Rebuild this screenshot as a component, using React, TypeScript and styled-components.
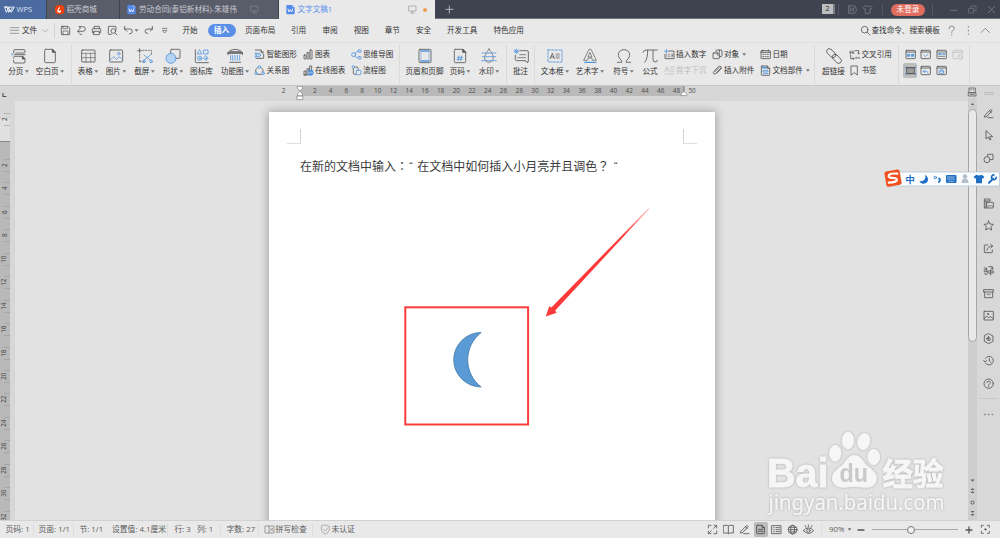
import React from "react";
import styled, { createGlobalStyle } from "styled-components";

const K = "#555";
const B = "#5596dd";

const Global = createGlobalStyle`
  * { box-sizing: border-box; }
  body { margin: 0; background: #e2e2e2; overflow: hidden; }
`;

const App_ = styled.div`
  position: relative;
  width: 1000px;
  height: 538px;
  display: flex;
  flex-direction: column;
  overflow: hidden;
  font-family: "Open Sans", "Noto Sans CJK SC", sans-serif;
  font-size: 7.6px;
  line-height: 1;
  color: #333;
  white-space: nowrap;
`;

/* ---------- icons: three drawing units per pixel ---------- */
const Svg = styled.svg`
  display: block;
  flex: none;
  fill: none;
  stroke-linecap: round;
  stroke-linejoin: round;
`;

type IconProps = { name: string; size: number; color?: string };

const paths: Record<string, React.ReactNode> = {
  pageBreak: (
    <>
      <path d="M8 15V8q0-3 3-3h28q3 0 3 3v4q0 3-3 3H14" />
      <path d="M10 20h32M8 31v-3q0-3 3-3h24l7 7v10q0 3-3 3H11q-3 0-3-3v-5" />
      <path d="M35 25l7 8h-7z" fill={K} />
      <path d="M2 15l5 4-5 4z" fill={B} stroke="none" />
    </>
  ),
  blank: (
    <>
      <path d="M11 4h20l9 9v28q0 3-3 3H11q-3 0-3-3V7q0-3 3-3z" />
      <path d="M31 4v9h9z" fill={K} />
    </>
  ),
  table: (
    <>
      <rect x="5" y="6" width="40" height="36" rx="2" />
      <path d="M5 16h40M5 29h40M18 16v26M32 16v26" strokeWidth="1.8" />
    </>
  ),
  picture: (
    <>
      <rect x="5" y="6" width="39" height="36" rx="3" />
      <path d="M8 35l9-9 9 8 8-8 8 8" stroke={B} />
      <circle cx="32" cy="17" r="4" stroke={B} />
    </>
  ),
  snip: (
    <>
      <path d="M8 2v12M2 8h12M18 7h3M26 7h3M34 7h3M43 7v3M43 15v4M8 19v3M8 27v3M8 36v5h4M17 41h2" />
      <path d="M21 21l19 16M40 21L21 37" stroke={B} />
      <circle cx="21" cy="40" r="4" stroke={B} />
      <circle cx="42" cy="40" r="4" stroke={B} />
    </>
  ),
  shapes: (
    <>
      <rect x="17" y="4" width="28" height="27" rx="3" />
      <circle cx="18" cy="31" r="15" fill="#b5d4f1" stroke={B} />
    </>
  ),
  iconLib: (
    <g stroke={B}>
      <path d="M4 5v36q0 3 3 3h36" stroke={K} />
      <path d="M17 6l7 12H10z" />
      <rect x="30" y="6" width="12" height="12" />
      <circle cx="17" cy="31" r="6.5" />
      <circle cx="17" cy="31" r="1.5" />
      <path d="M36 24l6.5 6.5L36 38l-6.5-7.5z" />
      <circle cx="36" cy="31" r="1.5" />
    </g>
  ),
  funcChart: (
    <>
      <path d="M3 20v-5q0-4 4-4h35q4 0 4 4v5M9 7q15-7 31 0" />
      <path d="M3 15h43" strokeWidth="4" />
      <path d="M11 22v15M17 22v15M24 22v15M31 22v15M38 22v15" stroke={B} />
      <path d="M8 43h33" />
    </>
  ),
  header: (
    <>
      <rect x="6" y="4" width="36" height="40" rx="3" />
      <path d="M12 9h24M12 39h24" stroke={B} strokeWidth="5" />
      <path d="M12 12v24M36 12v24" stroke={B} strokeWidth="1.5" />
    </>
  ),
  pageNo: (
    <>
      <path d="M10 4h22l9 9v28q0 3-3 3H10q-3 0-3-3V7q0-3 3-3z" />
      <path d="M32 4v9h9z" fill={K} />
      <path d="M21 24l-3 14M29 24l-3 14M16 28h16M15 34h16" stroke={B} />
    </>
  ),
  watermark: (
    <>
      <path d="M24 3C17 14 11 21 11 29c0 8 6 14 13 14s13-6 13-14C37 21 31 14 24 3z" strokeWidth="2" />
      <path d="M3 15h42M4 26h40M2 38h44" stroke={B} />
    </>
  ),
  comment: (
    <>
      <path d="M20 8h23q3 0 3 3v30q0 3-3 3M37 38H11q-4 0-4-4V22M37 38l7 5" />
      <path d="M20 20h18M14 29h24" strokeWidth="2" />
      <path d="M10 3v14M3 10h14M5 5l10 10M15 5L5 15" stroke={B} strokeWidth="2.5" />
    </>
  ),
  textbox: (
    <>
      <rect x="3" y="6" width="42" height="36" stroke={B} strokeDasharray="7 4" />
      <path d="M10 32l6-16 6 16M12 27h8" />
      <path d="M27 18h10M27 24h10M27 30h10" strokeWidth="2" />
    </>
  ),
  wordart: (
    <>
      <path d="M22 4h5l16 33H32l-3-7H19l-3 7H6z" strokeWidth="2" />
      <path d="M24 14l6 13H19z" strokeWidth="2" />
      <path d="M8 43h34" stroke={B} strokeWidth="4" />
    </>
  ),
  omega: <path d="M4 43h13v-5C1 26 5 5 24 5s23 21 7 33v5h13" />,
  pi: <path d="M3 13q2-7 9-7h34M17 7q1 25-9 36M33 7v27q0 9 9 8 3-1 4-5" />,
  link: (
    <g transform="rotate(45 24 24)">
      <rect x="-4" y="16" width="32" height="16" rx="8" />
      <rect x="20" y="16" width="32" height="16" rx="8" />
    </g>
  ),
  smart: (
    <>
      <path d="M4 3h18v6l7 6v13h-9" />
      <path d="M3 13h13l5 5-5 5H3l4-5z" fill="#b5d4f1" stroke={B} />
      <path d="M20 9h9M6 28h14" />
    </>
  ),
  relation: (
    <g stroke={B}>
      <path d="M10 8Q3 12 5 21M22 8q7 4 5 13M11 28h11" stroke={K} />
      <circle cx="16" cy="6" r="4" />
      <circle cx="6" cy="25" r="4" />
      <circle cx="27" cy="25" r="4" />
    </g>
  ),
  chart: (
    <>
      <rect x="3" y="18" width="6" height="12" rx="1" />
      <rect x="12" y="11" width="6" height="19" rx="1" />
      <rect x="21" y="3" width="6" height="27" rx="1" />
    </>
  ),
  onlineChart: (
    <>
      <path d="M3 29V18h6v11zM12 29V11h5v7M20 16V3h6v14M3 30h12" />
      <circle cx="23" cy="23" r="8" fill={B} stroke={B} />
      <path d="M16 23h14" stroke="#e9e9e9" strokeWidth="1.5" />
    </>
  ),
  mind: (
    <g stroke={B}>
      <circle cx="8" cy="17" r="6" />
      <rect x="21" y="3" width="10" height="7" rx="3" />
      <rect x="21" y="23" width="10" height="7" rx="3" />
      <path d="M12 13l8-6M12 21l8 6" />
    </g>
  ),
  flow: (
    <>
      <circle cx="7" cy="6" r="4" stroke={B} />
      <path d="M7 11v13q0 4 4 4h4M14 6h4q4 0 4 7" />
      <rect x="16" y="16" width="14" height="13" rx="2" stroke={B} />
    </>
  ),
  insNum: (
    <>
      <path d="M14 6h16v23H3V16" />
      <path d="M7 1v11M1 7h12" stroke={B} />
      <path d="M8 15v8M13 16h4l-4 7h4M22 15h4v8h-4M22 19h4" strokeWidth="1.5" />
    </>
  ),
  dropCap: (
    <g stroke="#bcbcbc">
      <path d="M3 20L9 4l6 16M5 15h8M19 6h11M19 13h11M19 20h11M3 27h27" strokeWidth="2" />
    </g>
  ),
  object: (
    <>
      <path d="M12 10V5q0-2 2-2h13q3 0 3 3v14q0 3-3 3h-4M22 3v7" />
      <rect x="3" y="12" width="19" height="17" rx="2" />
      <path d="M16 12v6h6" strokeWidth="2" />
    </>
  ),
  clip: <path d="M27 9L12 25q-4 4-7 1t1-7L19 5q5-4 8 0t-1 8L14 25M21 8L9 20" />,
  calendar: (
    <>
      <rect x="3" y="5" width="28" height="24" rx="2" />
      <path d="M3 10h28M9 3v4M25 3v4" />
      <path d="M8 16h3M15 16h3M22 16h3M8 23h3M15 23h3M22 23h3" />
    </>
  ),
  parts: (
    <>
      <path d="M6 3h16l7 7v19q0 2-2 2H6q-2 0-2-2V5q0-2 2-2z" />
      <path d="M8 8h11" stroke={B} strokeWidth="5" />
      <path d="M22 3v7h7" />
      <path d="M10 16h14v5H10zM10 26h14" stroke={B} />
    </>
  ),
  crossRef: (
    <>
      <path d="M3 12V6h4M3 10h4v3H3M11 12V6h4M11 10h4v3h-4" strokeWidth="1.8" />
      <path d="M19 5h10v9M5 18v11h10" />
      <path d="M20 28h4v-3h-4M28 28h3v-3h-3M12 26l4 3-4 3M26 12l3 4 3-4" strokeWidth="1.8" />
    </>
  ),
  bookmark: <path d="M7 3h18v27l-9-7-9 7z" />,
  field: (
    <>
      <rect x="3" y="4" width="28" height="25" rx="2" />
      <path d="M3 9h28" />
      <path d="M8 16h6v6H8zM20 16h6v6h-6z" fill={B} stroke={B} />
    </>
  ),
  checkbox: (
    <>
      <rect x="3" y="4" width="28" height="25" rx="2" />
      <path d="M3 9h28" />
      <path d="M11 18l5 5 8-8" stroke={B} />
    </>
  ),
  dropdown: (
    <>
      <rect x="3" y="4" width="28" height="25" rx="2" />
      <path d="M3 9h28M8 22h18" strokeWidth="2" />
      <path d="M8 15h8M21 15h5" stroke={B} strokeWidth="4" />
    </>
  ),
  protect: (
    <g stroke="#c2c2c2">
      <path d="M15 29H5q-2 0-2-2V6q0-2 2-2h24q2 0 2 2v9M3 10h28" />
      <circle cx="25" cy="24" r="7" />
      <path d="M20 19l10 10" />
    </g>
  ),
  shade: (
    <>
      <rect x="6" y="8" width="22" height="18" fill="#9c9c9c" />
      <path d="M3 8h28M3 26h28" />
      <path d="M3 4v4M31 4v4M3 30v-4M31 30v-4" stroke={B} />
    </>
  ),
  reset: (
    <>
      <rect x="3" y="4" width="28" height="25" rx="2" />
      <path d="M3 9h28" />
      <path d="M10 19h9q5 0 5 5M10 19l4-4M10 19l4 4" stroke={B} />
    </>
  ),
  lock: (
    <>
      <rect x="3" y="4" width="28" height="25" rx="2" />
      <path d="M3 9h28" />
      <path d="M11 18h12v7H11zM13 18v-3q4-4 8 0v3" stroke={B} />
    </>
  ),
  burger: <path d="M4 8h25M4 16h25M4 25h25" strokeWidth="2" />,
  save: (
    <>
      <path d="M6 4h18l5 5v18q0 2-2 2H6q-2 0-2-2V6q0-2 2-2z" />
      <path d="M9 4v7h13V4M9 29V18h15v11" strokeWidth="2" />
    </>
  ),
  saveAs: <path d="M9 5h11q8 0 8 7t-8 7H5M10 14l-5 5 5 5M12 28h5M12 5v6" />,
  print: (
    <>
      <path d="M9 11V4h16v7M9 23H4V13q0-2 2-2h21q2 0 2 2v10h-4" />
      <path d="M9 19h16v10H9z" />
    </>
  ),
  preview: (
    <>
      <path d="M13 28H6q-2 0-2-2V6q0-2 2-2h19q2 0 2 2v7" />
      <circle cx="19" cy="18" r="7" />
      <path d="M24 24l6 6" />
    </>
  ),
  undo: <path d="M5 12h15q8 0 8 7t-9 8M5 12l7 7M5 12V4" />,
  redo: <path d="M28 12H15q-9 0-9 7t8 6M28 12l-6 6M28 12V4" />,
  custom: <path d="M10 10h14M11 17l6 7 6-7z" strokeWidth="2" />,
  search: (
    <>
      <circle cx="14" cy="14" r="10" />
      <path d="M22 22l8 8" />
    </>
  ),
  question: <path d="M9 11q0-8 8-8t8 7q0 4-5 7-3 2-3 6M17 29v1" />,
  more: <path d="M16 5v1M16 16v1M16 27v1" strokeWidth="3.5" />,
  up: <path d="M4 22L16 10l12 12" />,
  chevron: <path d="M8 13l8 8 8-8" strokeWidth="2" />,
  monitor: <path d="M6 6h21v15H6zM16 21v6M11 27h11" strokeWidth="2" />,
  plus: <path d="M16 6v21M6 16h21" />,
  wps: <path d="M2 9h12l4 14 6-9-3-5h-5L7 25 2 9h7l5 16 3-7 5 7 9-16h-6" strokeWidth="2.6" />,
  flame: (
    <>
      <rect x="3" y="3" width="28" height="28" rx="12" fill="#f2410f" stroke="none" />
      <path d="M17 8c3 5-5 8-2 12 2 2 4 0 3-3 5 3 3 9-2 9-8 0-8-9 1-18z" fill="#fff" stroke="none" />
    </>
  ),
  doc: (
    <>
      <path d="M7 3h15l7 7v18q0 3-3 3H7q-3 0-3-3V6q0-3 3-3z" fill="#5589ea" stroke="none" />
      <path d="M22 3v7h7z" fill="#b6cdf8" stroke="none" />
      <path d="M9 15l3 9 4-7 4 7 3-9" stroke="#fff" />
    </>
  ),
  docer: (
    <>
      <path d="M6 5h12q10 0 10 12T18 28H6z" />
      <circle cx="16" cy="17" r="4" />
      <path d="M9 9v15M22 11l-3 3M22 23l-3-3" strokeWidth="2" />
    </>
  ),
  shirt: <path d="M10 5L3 11l4 5 3-2v14h14V14l3 2 4-5-7-6q-7 7-14 0z" />,
  minimize: <path d="M7 19h19" />,
  restore: <path d="M6 13h14v14H6zM12 13V6h15v14h-7" strokeWidth="2" />,
  close: <path d="M7 7l19 19M26 7L7 26" strokeWidth="2" />,
  pen: <path d="M6 22L22 5q4-1 5 3L12 25l-7 2zM20 9l5 4M14 29h16" />,
  cursor: <path d="M9 3v24l7-6 4 9 4-2-4-8h8z" />,
  shapes2: (
    <>
      <path d="M14 10V4h16v16h-6" />
      <circle cx="12" cy="20" r="9" />
    </>
  ),
  gallery: (
    <>
      <path d="M9 30H4V3h17v5M4 9h17M9 9v21" />
      <rect x="11" y="13" width="20" height="17" rx="2" />
      <path d="M13 27l5-5 4 3 3-3 4 4" strokeWidth="2" />
    </>
  ),
  star: <path d="M17 3l4 9 10 1-7 7 2 10-9-5-9 5 2-10-7-7 10-1z" />,
  share: <path d="M14 6H6q-2 0-2 2v19q0 2 2 2h20q2 0 2-2v-6M12 22q1-12 16-13M23 4l6 5-5 6" />,
  translate: <path d="M4 9h7v11H6q-3 0-3-3t3-3h5M17 5h11v7M25 9l3 4 3-4M15 18h16v6H15zM23 14v16M12 28H6v-4" />,
  box: <path d="M3 5h28v7H3zM5 12v17h24V12M12 18q5 5 10 0" />,
  image: (
    <>
      <rect x="3" y="4" width="28" height="26" rx="1" />
      <path d="M4 26l7-8 6 6 5-5 8 7" />
      <circle cx="15" cy="12" r="1.5" fill={K} />
    </>
  ),
  hexagon: (
    <>
      <path d="M17 2l13 7v16l-13 7-13-7V9z" />
      <path d="M12 17q0-5 5-7v4q6 0 5 6-3 5-8 2-3-2-2-5zM17 14v6" />
    </>
  ),
  history: <path d="M7 10a13 13 0 1 1 0 14M2 16l4 5 5-4M19 10v8l5 4" />,
  help: (
    <>
      <circle cx="17" cy="17" r="14" />
      <path d="M12 14q0-5 5-5t5 5q0 2-3 4-2 1-2 3M17 25v1" />
    </>
  ),
  expand: <path d="M4 12V4h8M21 4h8v8M29 21v8h-8M12 29H4v-8M20 13l8-8M13 20l-8 8" strokeWidth="2.4" />,
  book: <path d="M16 6v23M2 4h11l3 2 3-2h12v23H19l-3 2-3-2H2z" />,
  page: <path d="M7 4h14l7 7v16q0 2-2 2H7q-2 0-2-2V6q0-2 2-2zM21 4v7h7M10 16h13M10 22h13" stroke="#444" />,
  outline: <path d="M3 5h27v24H3zM8 11h2M8 17h2M8 23h2M15 11h11M15 17h11M15 23h11" />,
  globe: (
    <>
      <circle cx="17" cy="17" r="13" />
      <ellipse cx="17" cy="17" rx="6" ry="13" />
      <path d="M4 17h26M6 10h22M6 24h22" />
    </>
  ),
  eye: (
    <>
      <path d="M1 20q15-17 31 0Q17 37 1 20zM16 3v5M6 5l3 5M27 5l-3 5" />
      <circle cx="16" cy="20" r="5" />
    </>
  ),
  target: (
    <>
      <path d="M4 10V4h6M22 4h6v6M28 22v6h-6M10 28H4v-6" />
      <circle cx="16" cy="16" r="2" fill={K} />
    </>
  ),
  spell: <path d="M14 27H3V6h12v21M15 6h15v21H15M19 12l8 9M27 12l-8 9" strokeWidth="2" />,
  shield: <path d="M16 3l12 4v11q-2 8-12 12Q6 26 4 18V7zM10 16l5 5 8-9" strokeWidth="1.8" />,
  ruler: <path d="M7 3h18v14H7zM12 8h1M19 8h1M5 17h22v10H5zM10 22h12" strokeWidth="2.2" />,
};

const Icon = ({ name, size, color = K }: IconProps) => (
  <Svg width={size} height={size} viewBox={`0 0 ${size * 3} ${size * 3}`} stroke={color} strokeWidth={2.5}>
    {paths[name]}
  </Svg>
);

const Caret = styled.i<{ $gap?: number }>`
  width: 4px;
  height: 2.5px;
  flex: none;
  margin-left: ${(p) => p.$gap ?? 1.5}px;
  background: #777;
  clip-path: polygon(0 0, 100% 0, 50% 100%);
`;

/* ---------- title bar ---------- */
const TitleBar = styled.header`
  height: 19px;
  flex: none;
  display: flex;
  background: #3f434f;
  border-bottom: 1px solid #70737c;
`;
const Tab = styled.div<{ $w: number; $bg: string; $color: string; $pad: number }>`
  width: ${(p) => p.$w}px;
  height: 19px;
  flex: none;
  display: flex;
  align-items: center;
  gap: 2px;
  padding-left: ${(p) => p.$pad}px;
  background: ${(p) => p.$bg};
  color: ${(p) => p.$color};
  border-right: 1px solid ${(p) => (p.$bg === "#e9e9e9" ? "#e9e9e9" : "#3f434f")};
`;
const TabTools = styled.div<{ $r?: number }>`
  margin-left: auto;
  margin-right: ${(p) => p.$r ?? 7}px;
  display: flex;
  align-items: center;
  gap: 5px;
`;
const Dot = styled.i`
  width: 4px;
  height: 4px;
  border-radius: 50%;
  background: #ec9f4f;
`;
const WindowTools = styled.div`
  margin-left: auto;
  display: flex;
  align-items: center;
  padding-right: 3px;
`;
const Count = styled.span`
  width: 13px;
  height: 9.5px;
  background: #bdbdbf;
  border-right: 2.5px solid #7b7d85;
  color: #333;
  text-align: center;
  font-size: 7.8px;
  line-height: 9.5px;
`;
const Rule = styled.i<{ $h: number; $color: string; $l?: number; $r?: number }>`
  width: 1px;
  height: ${(p) => p.$h}px;
  flex: none;
  margin: 0 ${(p) => p.$r ?? 0}px 0 ${(p) => p.$l ?? 0}px;
  background: ${(p) => p.$color};
`;
const Login = styled.span`
  width: 34px;
  height: 12px;
  margin-top: 1px;
  border-radius: 6px;
  background: #df6d5f;
  color: #fff;
  text-align: center;
  line-height: 11.5px;
`;
const Shift = styled.span<{ $l: number }>`
  margin-left: ${(p) => p.$l}px;
  flex: none;
  display: flex;
  align-items: center;
`;

/* ---------- menu ---------- */
const MenuBar = styled.nav`
  height: 24px;
  flex: none;
  display: flex;
  align-items: center;
  background: #e9e9e9;
  border-bottom: 1px solid #dedede;
`;
const MenuItem = styled.span<{ $l: number; $w: number }>`
  margin-left: ${(p) => p.$l}px;
  width: ${(p) => p.$w}px;
  flex: none;
`;
const MenuPill = styled.span`
  margin-left: 10px;
  width: 28px;
  height: 13px;
  border-radius: 7px;
  background: #5a8fe8;
  color: #fff;
  font-weight: 700;
  text-align: center;
  line-height: 12.5px;
`;

/* ---------- ribbon ---------- */
const Ribbon = styled.section`
  height: 43px;
  flex: none;
  display: flex;
  background: #e9e9e9;
  border-bottom: 1px solid #c9c9c9;
`;
const Group = styled.div<{ $w: number; $pad: number }>`
  width: ${(p) => p.$w}px;
  height: 39px;
  margin-top: 2px;
  padding-left: ${(p) => p.$pad}px;
  flex: none;
  display: flex;
  border-right: 1px solid #dadada;
`;
const BigButton = styled.div<{ $w: number }>`
  width: ${(p) => p.$w}px;
  flex: none;
  display: flex;
  flex-direction: column;
  align-items: center;
  padding-top: 3px;
  gap: 3.5px;
`;
const Label = styled.span`
  display: flex;
  align-items: center;
  height: 8px;
`;
const Column = styled.div<{ $w: number; $l?: number }>`
  width: ${(p) => p.$w}px;
  margin-left: ${(p) => p.$l ?? 0}px;
  flex: none;
  display: flex;
  flex-direction: column;
  padding-top: 4px;
  gap: 5px;
`;
const SmallButton = styled.div<{ $off?: boolean }>`
  height: 11px;
  display: flex;
  align-items: center;
  gap: 1.5px;
  color: ${(p) => (p.$off ? "#bebebe" : "inherit")};
`;
const FieldGrid = styled.div`
  display: grid;
  grid-template-columns: repeat(4, 15.7px);
  grid-auto-rows: 16px;
  align-content: start;
  padding-top: 2px;
`;
const FieldCell = styled.div<{ $on?: boolean }>`
  width: 14px;
  height: 15px;
  display: flex;
  align-items: center;
  justify-content: center;
  border-radius: 2px;
  background: ${(p) => (p.$on ? "#bdbdbd" : "transparent")};
`;

/* ---------- workspace ---------- */
const Workspace = styled.main`
  height: 434px;
  flex: none;
  display: flex;
  background: #d7d7d7;
`;
const Side = styled.div`
  width: 15px;
  flex: none;
  display: flex;
  flex-direction: column;
  font-size: 6.4px;
  color: #444;
`;
const CornerMark = styled.div`
  height: 15px;
  padding: 7px 0 0 2px;
  flex: none;
`;
const SideTop = styled.div`
  width: 10px;
  height: 41px;
  flex: none;
  padding-top: 6px;
  background: linear-gradient(#d7d7d7 0 18px, #e0e0e0 18px);
  border-bottom: 1px solid #888;
`;
const SideDark = styled.div`
  width: 10px;
  flex: 1;
  overflow: hidden;
  padding-top: 11.5px;
  background: #b9b9b9;
`;
const SideCell = styled.div`
  height: 23.45px;
  display: flex;
  align-items: center;
  justify-content: center;
  background:
    linear-gradient(#9a9a9a, #9a9a9a) right 5.5px / 6px 0.6px no-repeat,
    linear-gradient(#9a9a9a, #9a9a9a) right 17.5px / 6px 0.6px no-repeat;
  span { transform: rotate(-90deg); }
`;
const Center = styled.div`
  width: 953px;
  flex: none;
  display: flex;
  flex-direction: column;
`;
const Ruler = styled.div`
  height: 15px;
  flex: none;
  display: flex;
  align-items: flex-start;
  font-size: 6.4px;
  color: #4c4c4c;
`;
const RulerStart = styled.div`
  width: 284.5px;
  height: 9.5px;
  padding-right: 14px;
  text-align: right;
  line-height: 9.5px;
`;
const RulerBand = styled.div`
  position: relative;
  width: 384px;
  height: 9.5px;
  display: flex;
  padding-left: 7.5px;
  background: #b9b9b9;
  line-height: 9.5px;
`;
const RulerNum = styled.span`
  width: 15.73px;
  flex: none;
  text-align: center;
`;
const Indent = styled.div<{ $x: number }>`
  position: absolute;
  left: ${(p) => p.$x}px;
  top: 0;
`;
const Canvas = styled.div`
  position: relative;
  flex: 1;
  background: #e2e2e2;
  overflow: hidden;
`;
const Page = styled.article`
  position: relative;
  width: 446px;
  height: 420px;
  margin: 11px 0 0 254px;
  padding: 17px 18px 0;
  background: #fff;
  box-shadow: 0 0 9px 1px rgba(0, 0, 0, 0.28);
`;
const Corners = styled.div`
  display: flex;
  justify-content: space-between;
`;
const Crop = styled.i<{ $right?: boolean }>`
  width: 14px;
  height: 14.5px;
  border-bottom: 1.5px solid #dedede;
  border-right: ${(p) => (p.$right ? "0" : "1px solid #d2d2d2")};
  border-left: ${(p) => (p.$right ? "1px solid #d2d2d2" : "0")};
`;
const Line = styled.p`
  margin: 15px 0 0 13px;
  font-family: "Noto Sans CJK SC", sans-serif;
  font-size: 12px;
  line-height: 14px;
  color: #3c3c3c;
  display: flex;
`;
const Mark = styled.span<{ $w: number }>`
  width: ${(p) => p.$w}px;
  flex: none;
  font-family: "Noto Sans CJK JP", sans-serif;
`;
const Quote = styled.span<{ $w: number }>`
  width: ${(p) => p.$w}px;
  flex: none;
  padding-left: 0.5px;
  font-family: "Liberation Sans", sans-serif;
  font-size: 11px;
  font-style: italic;
`;
const Drawing = styled.svg`
  position: absolute;
  left: 0;
  top: 0;
`;
const Watermark = styled.svg`
  position: absolute;
  right: 18px;
  bottom: 0;
  filter: drop-shadow(0 0 1px #a8a8a8);
`;

/* ---------- scroll bar and side tools ---------- */
const Scroll = styled.div`
  width: 9px;
  flex: none;
  display: flex;
  flex-direction: column;
  align-items: center;
  padding-top: 1px;
`;
const Track = styled.div`
  width: 9px;
  flex: 1;
  display: flex;
  flex-direction: column;
  align-items: center;
  background: #cecece;
`;
const TrackTop = styled.div`
  padding: 5px 0 4px;
`;
const TrackBottom = styled.div`
  padding-top: 136.5px;
`;
const Thumb = styled.i`
  width: 8.5px;
  height: 233px;
  flex: none;
  border: 1px solid #a6a6a6;
  border-radius: 4.5px;
  background: #e9e9e9;
`;
const Tools = styled.aside`
  width: 23px;
  flex: none;
  display: flex;
  flex-direction: column;
  align-items: center;
  background: #d8d8d8;
`;
const Grip = styled.i`
  width: 10px;
  height: 3px;
  margin: 6px 0 12.5px;
  flex: none;
  border: solid #bdbdbd;
  border-width: 1px 0;
`;
const Tool = styled.div`
  height: 22.5px;
  flex: none;
`;
const ToolEnd = styled.div`
  width: 19px;
  height: 17px;
  margin-top: -2px;
  padding: 10px 0 0 4px;
  border-top: 1px solid #c8c8c8;
`;

/* ---------- input method bar ---------- */
const Ime = styled.div`
  position: absolute;
  left: 883px;
  top: 169px;
`;

/* ---------- status bar ---------- */
const Status = styled.footer`
  height: 18px;
  flex: none;
  display: flex;
  align-items: center;
  background: #e9e9e9;
  border-top: 1px solid #d2d2d2;
  font-size: 7.8px;
  color: #5c5c5c;
`;
const StatusText = styled.span<{ $l: number; $w: number }>`
  margin-left: ${(p) => p.$l}px;
  width: ${(p) => p.$w}px;
  flex: none;
`;
const View = styled.span<{ $l: number; $on?: boolean }>`
  margin-left: ${(p) => p.$l}px;
  width: 14px;
  height: 15px;
  flex: none;
  display: flex;
  align-items: center;
  justify-content: center;
  border-radius: 2px;
  background: ${(p) => (p.$on ? "#bcbcbc" : "transparent")};
`;
const Slider = styled.div`
  width: 86px;
  height: 1px;
  margin: 0 7px;
  display: flex;
  align-items: center;
  padding-left: 34.5px;
  background: #a9a9a9;
`;
const Knob = styled.i`
  width: 8px;
  height: 8px;
  flex: none;
  border: 1px solid #777;
  border-radius: 50%;
  background: #f2f2f2;
`;

type ButtonProps = { icon: string; text: string; w?: number; caret?: boolean; off?: boolean };

const Big = ({ icon, text, w = 28, caret }: ButtonProps) => (
  <BigButton $w={w}>
    <Icon name={icon} size={16} />
    <Label>
      {text}
      {caret && <Caret />}
    </Label>
  </BigButton>
);

const Small = ({ icon, text, caret, off }: ButtonProps) => (
  <SmallButton $off={off}>
    <Icon name={icon} size={11} />
    {text}
    {caret && <Caret />}
  </SmallButton>
);

const range = (from: number, to: number) =>
  Array.from({ length: (to - from) / 2 + 1 }, (_, i) => from + i * 2);

const Title = () => (
  <TitleBar>
    <Tab $w={47} $bg="#4a6aa0" $color="#d9e2f2" $pad={3.5}>
      <Icon name="wps" size={11} color="#fff" />
      <span>WPS</span>
    </Tab>
    <Tab $w={73} $bg="#595c69" $color="#c9cad0" $pad={6.5}>
      <Icon name="flame" size={11} />
      <span>稻壳商城</span>
    </Tab>
    <Tab $w={159} $bg="#595c69" $color="#c9cad0" $pad={6}>
      <Icon name="doc" size={11} />
      <span>劳动合同(泰铝新材料)-朱雄伟</span>
      <TabTools $r={18}>
        <Icon name="monitor" size={11} color="#85878f" />
      </TabTools>
    </Tab>
    <Tab $w={156} $bg="#e9e9e9" $color="#5a90ee" $pad={5.5}>
      <Icon name="doc" size={11} />
      <span>文字文稿1</span>
      <TabTools>
        <Icon name="monitor" size={11} color="#999" />
        <Dot />
      </TabTools>
    </Tab>
    <Shift $l={9}>
      <Icon name="plus" size={11} color="#c9cad0" />
    </Shift>
    <WindowTools>
      <Count>2</Count>
      <Rule $h={11} $color="#565965" $l={3} $r={8} />
      <Icon name="docer" size={11} color="#757884" />
      <Shift $l={4}>
        <Icon name="shirt" size={11} color="#757884" />
      </Shift>
      <Rule $h={11} $color="#565965" $l={9} $r={8} />
      <Login>未登录</Login>
      <Rule $h={11} $color="#565965" $l={7} $r={15} />
      <Icon name="minimize" size={11} color="#777a86" />
      <Shift $l={8}>
        <Icon name="restore" size={11} color="#777a86" />
      </Shift>
      <Shift $l={8}>
        <Icon name="close" size={11} color="#8a8c96" />
      </Shift>
    </WindowTools>
  </TitleBar>
);

const Menu = () => (
  <MenuBar>
    <Shift $l={9}><Icon name="burger" size={11} color="#777" /></Shift>
    <MenuItem $l={2} $w={16}>文件</MenuItem>
    <Shift $l={2}><Icon name="chevron" size={11} color="#999" /></Shift>
    <Rule $h={15} $color="#d2d2d2" $l={3} $r={5} />
    <Icon name="save" size={11} />
    <Shift $l={5}><Icon name="saveAs" size={11} /></Shift>
    <Shift $l={4}><Icon name="print" size={11} /></Shift>
    <Shift $l={5}><Icon name="preview" size={11} /></Shift>
    <Shift $l={5}><Icon name="undo" size={11} /></Shift>
    <Caret $gap={0.5} />
    <Shift $l={4}><Icon name="redo" size={11} /></Shift>
    <Shift $l={5}><Icon name="custom" size={11} /></Shift>
    <MenuItem $l={13} $w={15}>开始</MenuItem>
    <MenuPill>插入</MenuPill>
    <MenuItem $l={9.5} $w={30}>页面布局</MenuItem>
    <MenuItem $l={16} $w={15}>引用</MenuItem>
    <MenuItem $l={16.5} $w={15}>审阅</MenuItem>
    <MenuItem $l={16.2} $w={15}>视图</MenuItem>
    <MenuItem $l={16} $w={15}>章节</MenuItem>
    <MenuItem $l={16.3} $w={15}>安全</MenuItem>
    <MenuItem $l={16} $w={30}>开发工具</MenuItem>
    <MenuItem $l={16.5} $w={30}>特色应用</MenuItem>
    <Shift $l={337}><Icon name="search" size={11} /></Shift>
    <MenuItem $l={0} $w={69}>查找命令、搜索模板</MenuItem>
    <Shift $l={6}><Icon name="question" size={11} color="#777" /></Shift>
    <Shift $l={6}><Icon name="more" size={11} color="#777" /></Shift>
    <Shift $l={6}><Icon name="up" size={11} color="#777" /></Shift>
  </MenuBar>
);

const RibbonBar = () => (
  <Ribbon>
    <Group $w={72} $pad={3}>
      <Big icon="pageBreak" text="分页" w={31} caret />
      <Big icon="blank" text="空白页" w={32} caret />
    </Group>
    <Group $w={328} $pad={2}>
      <Big icon="table" text="表格" caret />
      <Big icon="picture" text="图片" caret />
      <Big icon="snip" text="截屏" w={29} caret />
      <Big icon="shapes" text="形状" caret />
      <Big icon="iconLib" text="图标库" w={29} />
      <Big icon="funcChart" text="功能图" w={38} caret />
      <Column $w={48.5}>
        <Small icon="smart" text="智能图形" />
        <Small icon="relation" text="关系图" />
      </Column>
      <Column $w={48}>
        <Small icon="chart" text="图表" />
        <Small icon="onlineChart" text="在线图表" />
      </Column>
      <Column $w={46}>
        <Small icon="mind" text="思维导图" />
        <Small icon="flow" text="流程图" />
      </Column>
    </Group>
    <Group $w={107} $pad={4}>
      <Big icon="header" text="页眉和页脚" w={41} />
      <Big icon="pageNo" text="页码" w={30} caret />
      <Big icon="watermark" text="水印" caret />
    </Group>
    <Group $w={28} $pad={0}>
      <Big icon="comment" text="批注" w={27} />
    </Group>
    <Group $w={280} $pad={3}>
      <Big icon="textbox" text="文本框" w={34} caret />
      <Big icon="wordart" text="艺术字" w={36} caret />
      <Big icon="omega" text="符号" w={31} caret />
      <Big icon="pi" text="公式" w={22} />
      <Column $w={48} $l={2.5}>
        <Small icon="insNum" text="插入数字" />
        <Small icon="dropCap" text="首字下沉" off />
      </Column>
      <Column $w={48.5}>
        <Small icon="object" text="对象" caret />
        <Small icon="clip" text="插入附件" />
      </Column>
      <Column $w={48}>
        <Small icon="calendar" text="日期" />
        <Small icon="parts" text="文档部件" caret />
      </Column>
    </Group>
    <Group $w={84} $pad={3}>
      <Big icon="link" text="超链接" w={31} />
      <Column $w={48}>
        <Small icon="crossRef" text="交叉引用" />
        <Small icon="bookmark" text="书签" />
      </Column>
    </Group>
    <Group $w={71} $pad={4}>
      <FieldGrid>
        {["field", "checkbox", "dropdown", "protect", "shade", "reset", "lock"].map((n) => (
          <FieldCell key={n} $on={n === "shade"}>
            <Icon name={n} size={11} />
          </FieldCell>
        ))}
      </FieldGrid>
    </Group>
  </Ribbon>
);

const PageDrawing = () => (
  <Drawing width="446" height="408" viewBox="269 112 446 408">
    <defs>
      <linearGradient id="tail" gradientUnits="userSpaceOnUse" x1="546" y1="316" x2="649" y2="208">
        <stop offset="0.75" stopColor="#fd3a3a" />
        <stop offset="1" stopColor="#fd3a3a" stopOpacity="0.35" />
      </linearGradient>
    </defs>
    <rect x="405.3" y="307.3" width="122.8" height="117.2" fill="none" stroke="#fa3c3c" strokeWidth="2" />
    <path
      d="M481.2 332.5A27.5 27.25 0 0 0 481.2 387A34.3 34.3 0 0 1 481.2 332.5Z"
      fill="#5b9bd5"
      stroke="#4478a8"
      strokeWidth="0.8"
    />
    <path d="M545.8 316.6l3.4-10.4 2.2 1.2L648.6 208.2l.7.6L555.2 310.4l1.5 2.3z" fill="url(#tail)" />
  </Drawing>
);

const BaiduMark = () => (
  <Watermark width="190" height="100" viewBox="760 420 190 100" fill="#f6f6f6" stroke="#f6f6f6" strokeWidth="0.9">
    <text x="767" y="486.5" fontSize="40" fontWeight="700" fontFamily="Liberation Sans, Arial, sans-serif" textLength="61.5" lengthAdjust="spacingAndGlyphs">Bai</text>
    <ellipse cx="835.3" cy="453.3" rx="5.8" ry="8" />
    <ellipse cx="848" cy="440.5" rx="5.8" ry="8.5" />
    <ellipse cx="863.8" cy="441.5" rx="6" ry="8.2" transform="rotate(12 863.8 441.5)" />
    <ellipse cx="873.7" cy="457" rx="6" ry="7.7" />
    <path d="M854.5 455.5C862 455.5 862.5 463 869 467.5C876 472 878.5 478 875 483.5C871 489.500 862 486.5 854.5 486.5C847 486.5 838 489.5 834 483.5C830.5 478 833 472 839.5 467.5C846.5 463 847 455.5 854.5 455.5Z" />
    <text x="839.5" y="482" fontSize="25" fontWeight="700" fontFamily="Liberation Sans, Arial, sans-serif" fill="#c9c9c9" stroke="none" textLength="28.5" lengthAdjust="spacingAndGlyphs">du</text>
    <text x="882.5" y="484.5" fontSize="30.5" fontWeight="700" fontFamily="Noto Sans CJK SC, sans-serif">经验</text>
    <text x="768.5" y="510" fontSize="21" fontFamily="Noto Sans, sans-serif" strokeWidth="0.2" textLength="176" lengthAdjust="spacingAndGlyphs">jingyan.baidu.com</text>
  </Watermark>
);

const Arrow = ({ d, h }: { d: string; h: number }) => (
  <Svg width="5" height={h} viewBox={`0 0 5 ${h}`}>
    <path d={d} fill="#606060" />
  </Svg>
);

const ImeBar = () => (
  <Ime>
    <Svg width="117" height="20" viewBox="883 169 117 20">
      <rect x="889" y="172" width="110.5" height="14" fill="#fbfdff" stroke="#b4c6d6" strokeWidth="0.8" />
      <g transform="rotate(-10 893 178)">
        <rect x="885.3" y="170.5" width="15.4" height="15.4" rx="2" fill="#f0501e" />
        <path d="M898 174.5q-7-2-8.5 0t1.5 3q6 .7 5.5 3t-8.5 1.3" stroke="#fff" strokeWidth="2.2" />
      </g>
      <text x="905.2" y="182.5" fontSize="9.6" fontWeight="700" fontFamily="Noto Sans CJK SC, sans-serif" fill="#1f6fc4">中</text>
      <path d="M925 174.8C930 178 928.5 183.5 923.5 183.7 921.5 183.7 920 182.7 919.6 181.2 923.5 181.8 926.5 179 925 174.8Z" fill="#1f6fc4" />
      <circle cx="935.3" cy="177.5" r="1.2" stroke="#1f6fc4" strokeWidth=".8" />
      <path d="M939.2 178.5q1.5 1.5-.3 3.5" stroke="#1f6fc4" strokeWidth="1.8" />
      <rect x="946" y="175" width="10.5" height="8" rx="1" fill="#1f6fc4" />
      <path d="M947.5 177h7.5M947.5 179h7.5M949 181.3h4.5" stroke="#d5e6f6" strokeWidth=".7" strokeDasharray="1 .9" />
      <circle cx="965" cy="176.5" r="2.3" fill="#b3bdcc" />
      <path d="M961.5 183q0-4.5 3.5-4.5t3.5 4.5z" fill="#b3bdcc" />
      <path d="M976.5 174.7l-2.7 1.8 1 2.3 1.2-.5v5h6v-5l1.2.5 1-2.3-2.7-1.8q-2.5 1.5-5 0z" fill="#1f6fc4" />
      <path d="M989 182.8l4.2-4.2" stroke="#1f6fc4" strokeWidth="2" />
      <path d="M996.3 177.3a2.4 2.4 0 1 1-2.4-2.4" stroke="#1f6fc4" strokeWidth="1.6" />
    </Svg>
  </Ime>
);

const StatusBar = () => (
  <Status>
    <StatusText $l={5.5} $w={24}>页码: 1</StatusText>
    <Rule $h={14} $color="#dedede" $l={3} $r={5} />
    <StatusText $l={0} $w={31}>页面: 1/1</StatusText>
    <Rule $h={14} $color="#dedede" $l={3} $r={6} />
    <StatusText $l={0} $w={24}>节: 1/1</StatusText>
    <StatusText $l={8.5} $w={53}>设置值: 4.1厘米</StatusText>
    <Rule $h={14} $color="#dedede" $l={2} $r={6.5} />
    <StatusText $l={0} $w={16}>行: 3</StatusText>
    <StatusText $l={6.5} $w={16}>列: 1</StatusText>
    <Rule $h={14} $color="#dedede" $l={7} $r={5.5} />
    <StatusText $l={0} $w={28}>字数: 27</StatusText>
    <Rule $h={14} $color="#dedede" $l={3.5} $r={4.5} />
    <Icon name="spell" size={11} color="#777" />
    <StatusText $l={1} $w={31}>拼写检查</StatusText>
    <Rule $h={14} $color="#dedede" $l={5} $r={7} />
    <Icon name="shield" size={11} color="#888" />
    <StatusText $l={1} $w={24}>未认证</StatusText>
    <View $l={349.5}><Icon name="expand" size={11} /></View>
    <View $l={2}><Icon name="book" size={11} /></View>
    <View $l={2.5}><Icon name="pen" size={11} /></View>
    <View $l={2} $on><Icon name="page" size={11} /></View>
    <View $l={2}><Icon name="outline" size={11} /></View>
    <View $l={2}><Icon name="globe" size={11} /></View>
    <View $l={2}><Icon name="eye" size={11} /></View>
    <Rule $h={14} $color="#dedede" $l={5.5} $r={7} />
    <StatusText $l={0} $w={17}>90%</StatusText>
    <Caret />
    <Shift $l={5.5}>
      <Svg width="8" height="8" viewBox="0 0 8 8">
        <path d="M1 4h6" stroke="#555" strokeWidth="1.3" />
      </Svg>
    </Shift>
    <Slider>
      <Knob />
    </Slider>
    <Svg width="8" height="8" viewBox="0 0 8 8">
      <path d="M1 4h6M4 1v6" stroke="#555" strokeWidth="1.3" />
    </Svg>
    <Shift $l={7}><Icon name="target" size={11} /></Shift>
  </Status>
);

const sideTools = ["pen", "cursor", "shapes2", "blankSlot", "gallery", "star", "share", "translate", "box", "image", "hexagon", "history", "help"];

export default function App() {
  return (
    <App_>
      <Global />
      <Title />
      <Menu />
      <RibbonBar />
      <Workspace>
        <Side>
          <CornerMark>
            <Svg width="5" height="5" viewBox="0 0 5 5">
              <path d="M1 0.5V3.5H4" stroke="#555" strokeWidth="1.2" />
            </Svg>
          </CornerMark>
          <SideTop>
            <SideCell><span>2</span></SideCell>
          </SideTop>
          <SideDark>
            {range(2, 32).map((n) => (
              <SideCell key={n}><span>{n}</span></SideCell>
            ))}
          </SideDark>
        </Side>
        <Center>
          <Ruler>
            <RulerStart>2</RulerStart>
            <RulerBand>
              {range(2, 50).map((n) => (
                <RulerNum key={n}>{n}</RulerNum>
              ))}
              <Indent $x={-4}>
                <Svg width="8" height="15" viewBox="0 0 8 15" stroke="#888" strokeWidth="0.7">
                  <path d="M1.5 .6h5v1.5L4 5 1.5 2.1zM4 5.5L6.5 8v1.8h-5V8zM1.2 10h5.6v3.5H1.2z" fill="#fff" />
                </Svg>
              </Indent>
              <Indent $x={380}>
                <Svg width="8" height="15" viewBox="0 0 8 15" stroke="#888" strokeWidth="0.7">
                  <path d="M4 0v6" stroke="#555" />
                  <path d="M4 5.5L6.8 8v1.6H1.2V8z" fill="#fff" />
                </Svg>
              </Indent>
            </RulerBand>
          </Ruler>
          <Canvas>
            <Page>
              <Corners>
                <Crop />
                <Crop $right />
              </Corners>
              <Line>
                在新的文档中输入
                <Mark $w={12}>：</Mark>
                <Quote $w={9.3}>“</Quote>
                在文档中如何插入小月亮并且调色
                <Mark $w={15.5}>？</Mark>
                <Quote $w={9}>“</Quote>
              </Line>
              <PageDrawing />
            </Page>
            <BaiduMark />
          </Canvas>
        </Center>
        <Scroll>
          <Icon name="ruler" size={11} />
          <Track>
            <TrackTop>
              <Arrow d="M.5 2.5L2.5 0l2 2.5z" h={2} />
            </TrackTop>
            <Thumb />
            <TrackBottom>
              <Arrow d="M.5 .5h4L2.5 2.7zM2.5 9l2 2H.5zM2.5 12l2 2H.5zM.5 32h4l-2 2zM.5 35h4l-2 2zM2.5 21.5a2 2 0 1 0 .01 0zm0 .8a1.2 1.2 0 1 1-.01 0z" h={38} />
            </TrackBottom>
          </Track>
        </Scroll>
        <Tools>
          <Grip />
          {sideTools.map((n) => (
            <Tool key={n}>
              <Icon name={n} size={11} />
            </Tool>
          ))}
          <ToolEnd>
            <Svg width="11" height="12" viewBox="0 0 11 12">
              <path d="M1.5 5.5h.5M5.3 5.5h.5M9.1 5.5h.5" stroke="#888" strokeWidth="1.5" />
            </Svg>
          </ToolEnd>
        </Tools>
      </Workspace>
      <StatusBar />
      <ImeBar />
    </App_>
  );
}
